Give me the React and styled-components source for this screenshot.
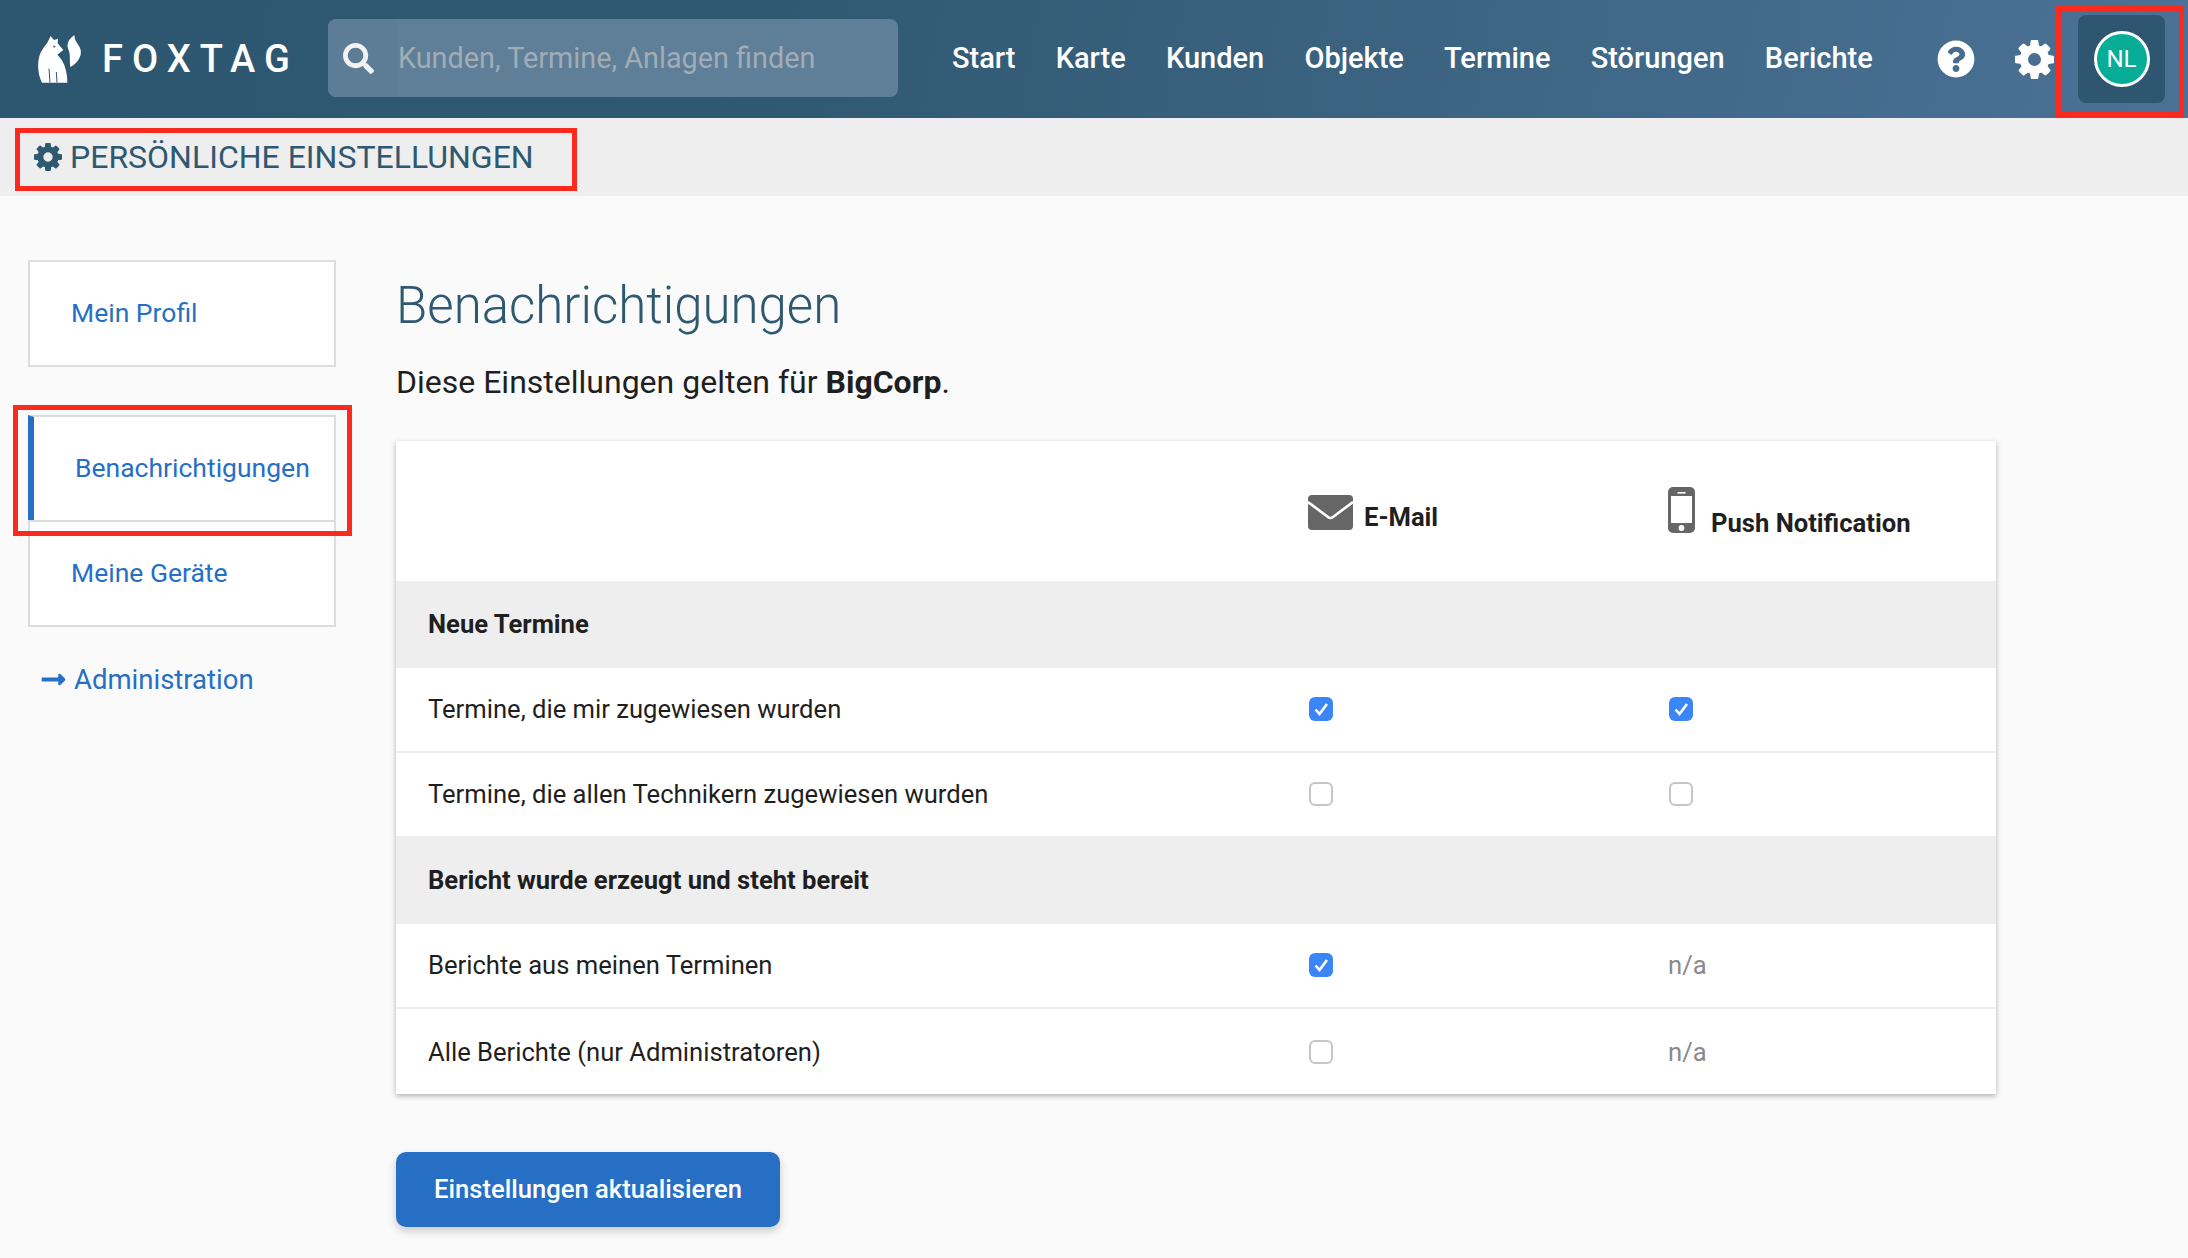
import React from "react"
import styled, { createGlobalStyle } from "styled-components"
import { FaLongArrowAltRight, FaQuestionCircle, FaSearch } from "react-icons/fa"

const GlobalStyle = createGlobalStyle`
    html, body {
        margin: 0;
        min-height: 100%;
        background: #fafafa;
        font-family: Roboto, "Liberation Sans", sans-serif;
        color: #1f1f1f;
    }
    * { box-sizing: border-box; }
`;

const NAV_ITEMS = ["Start", "Karte", "Kunden", "Objekte", "Termine", "Störungen", "Berichte"];

function CogIcon({ size }) {
    return (
        <svg width={size} height={size} viewBox="128 128 1536 1536" fill="currentColor">
            <path fillRule="evenodd" d="M1152 896q0-106-75-181t-181-75-181 75-75 181 75 181 181 75 181-75 75-181zm512-109v222q0 12-8 23t-20 13l-185 28q-19 54-39 91 35 50 107 138 10 12 10 25t-9 23q-27 37-99 108t-94 71q-12 0-26-9l-138-108q-44 23-91 38-16 136-29 186-7 28-36 28h-222q-14 0-24.5-8.5t-11.5-21.5l-28-184q-49-16-90-37l-141 107q-10 9-25 9-14 0-25-11-126-114-165-168-7-10-7-23 0-12 8-23 15-21 51-66.5t54-70.5q-27-50-41-99l-183-27q-13-2-21-12.5t-8-23.5v-222q0-12 8-23t19-13l186-28q14-46 39-92-40-57-107-138-10-12-10-24 0-10 9-23 26-36 98.5-107.5t94.5-71.5q13 0 26 10l138 107q44-23 91-38 16-136 29-186 7-28 36-28h222q14 0 24.5 8.5t11.5 21.5l28 184q49 16 90 37l142-107q9-9 24-9 13 0 25 10 129 119 165 170 7 8 7 22 0 12-8 23-15 21-51 66.5t-54 70.5q26 50 41 98l183 28q13 2 21 12.5t8 23.5z" />
        </svg>
    );
}

function FoxLogo() {
    return (
        <LogoSvg viewBox="0 0 210 195">
            <path fill="#fff" d="M62 30 L72 42 L84 38 L83 52 L100 72 L82 86 C100 102 112 130 112 170 L36 170 C26 150 22 125 26 100 C30 75 44 62 52 50 Z" />
            <path stroke="#2e5670" strokeWidth="3" fill="none" d="M57 128 L60 170 M79 138 L81 170" />
            <path fill="#2e5670" d="M68 58 L78 62 L72 65 Z" />
            <path fill="#fff" d="M133 27 C118 38 108 52 115 70 C122 86 118 104 121 123 C142 112 156 92 152 72 C148 54 134 50 133 27 Z" />
        </LogoSvg>
    );
}

function EnvelopeIcon() {
    return (
        <svg width="45" height="35" viewBox="0 0 45 35">
            <rect width="45" height="35" rx="4" fill="#666" />
            <path d="M0 7 L20 22 Q22.5 24 25 22 L45 7" fill="none" stroke="#fff" strokeWidth="2.6" />
        </svg>
    );
}

function PhoneIcon() {
    return (
        <svg width="27" height="46" viewBox="0 0 27 46">
            <rect width="27" height="46" rx="5" fill="#666" />
            <rect x="3" y="9" width="21" height="27" fill="#fff" />
            <rect x="9.5" y="5" width="8" height="1.6" fill="#fff" />
            <circle cx="13.5" cy="41" r="2.9" fill="#fff" />
        </svg>
    );
}

function Check({ checked }) {
    return (
        <CheckBox $checked={checked}>
            {checked && (
                <svg width="24" height="24" viewBox="0 0 24 24">
                    <path d="M6.5 12.5 L10.5 17 L18 7" fill="none" stroke="#fff" strokeWidth="2.6" />
                </svg>
            )}
        </CheckBox>
    );
}

export default function App() {
    return (
        <>
            <GlobalStyle />
            <Header>
                <Logo>
                    <FoxLogo />
                    <LogoText>FOXTAG</LogoText>
                </Logo>
                <Search>
                    <SearchAddon><FaSearch size={31} /></SearchAddon>
                    <SearchInput placeholder="Kunden, Termine, Anlagen finden" />
                </Search>
                <Nav>
                    {NAV_ITEMS.map((item) => <NavLink key={item}>{item}</NavLink>)}
                </Nav>
                <HeaderIcons>
                    <FaQuestionCircle size={38} />
                    <CogIcon size={39} />
                </HeaderIcons>
                <AvatarBox>
                    <Avatar>NL</Avatar>
                    <RedBox $inset="-9px -19px -14px -22px" />
                </AvatarBox>
            </Header>

            <SubHeader>
                <CogIcon size={28} />
                <SubTitle>PERSÖNLICHE EINSTELLUNGEN</SubTitle>
                <RedBox $inset="10px auto 5px 15px" $width="562px" />
            </SubHeader>

            <Page>
                <Sidebar>
                    <SideItem>Mein Profil</SideItem>
                    <SideGroup>
                        <SideItem $active>
                            Benachrichtigungen
                            <RedBox $inset="-12px -18px -16px -21px" />
                        </SideItem>
                        <SideItem>Meine Geräte</SideItem>
                    </SideGroup>
                    <AdminLink>
                        <FaLongArrowAltRight size={27} />
                        Administration
                    </AdminLink>
                </Sidebar>

                <Content>
                    <Title>Benachrichtigungen</Title>
                    <Intro>Diese Einstellungen gelten für <b>BigCorp</b>.</Intro>

                    <Card>
                        <HeadRow>
                            <span />
                            <HeadCell><EnvelopeIcon /><EmailLabel>E-Mail</EmailLabel></HeadCell>
                            <HeadCell $push><PhoneIcon /><PushLabel>Push Notification</PushLabel></HeadCell>
                        </HeadRow>

                        <GroupRow $height="87px">Neue Termine</GroupRow>
                        <Row>
                            <span>Termine, die mir zugewiesen wurden</span>
                            <Check checked />
                            <Check checked />
                        </Row>
                        <Row>
                            <span>Termine, die allen Technikern zugewiesen wurden</span>
                            <Check />
                            <Check />
                        </Row>

                        <GroupRow $height="86px">Bericht wurde erzeugt und steht bereit</GroupRow>
                        <Row>
                            <span>Berichte aus meinen Terminen</span>
                            <Check checked />
                            <NotAvailable>n/a</NotAvailable>
                        </Row>
                        <Row $last>
                            <span>Alle Berichte (nur Administratoren)</span>
                            <Check />
                            <NotAvailable>n/a</NotAvailable>
                        </Row>
                    </Card>

                    <SaveButton>Einstellungen aktualisieren</SaveButton>
                </Content>
            </Page>
        </>
    );
}

const Header = styled.header`
    display: flex;
    align-items: center;
    height: 118px;
    padding-left: 30px;
    background: linear-gradient(100deg, #2d5670 0%, #2f5871 35%, #4b7296 100%);
    color: #fff;
`;

const Logo = styled.div`
    display: flex;
    align-items: center;
    width: 298px;
    flex-shrink: 0;
`;

const LogoSvg = styled.svg`
    width: 70px;
    height: 65px;
    margin-bottom: 1px;
`;

const LogoText = styled.span`
    margin-left: 2px;
    font-size: 38px;
    font-weight: 500;
    letter-spacing: 9px;
`;

const Search = styled.div`
    display: flex;
    width: 570px;
    height: 78px;
    margin-bottom: 2px;
    border-radius: 8px;
    overflow: hidden;
    background: #5e7f97;
`;

const SearchAddon = styled.div`
    display: flex;
    align-items: center;
    justify-content: center;
    width: 70px;
    padding-right: 10px;
    color: #f2f2f2;
    background: #5c7d95;
`;

const SearchInput = styled.input`
    flex: 1;
    border: 0;
    padding: 0;
    background: transparent;
    font-family: inherit;
    font-size: 28.8px;
    outline: none;
    &::placeholder { color: #a1adb6; opacity: 1; }
`;

const Nav = styled.nav`
    display: flex;
    gap: 40.2px;
    margin: 0 0 2px 54px;
    width: 985px;
`;

const NavLink = styled.a`
    font-size: 29px;
    font-weight: 500;
`;

const HeaderIcons = styled.div`
    display: flex;
    align-items: center;
    gap: 40px;
    svg { display: block; }
`;

const AvatarBox = styled.div`
    position: relative;
    display: flex;
    align-items: center;
    justify-content: center;
    width: 87px;
    height: 88px;
    margin-left: 24px;
    border-radius: 8px;
    background: #2e5670;
`;

const Avatar = styled.div`
    display: flex;
    align-items: center;
    justify-content: center;
    width: 56px;
    height: 56px;
    border: 3px solid #fff;
    border-radius: 50%;
    background: #07ad96;
    font-size: 24px;
`;

const RedBox = styled.div`
    position: absolute;
    inset: ${(props) => props.$inset};
    width: ${(props) => props.$width || "auto"};
    border: 5px solid #fb2a1e;
    pointer-events: none;
    z-index: 2;
`;

const SubHeader = styled.div`
    position: relative;
    display: flex;
    align-items: center;
    gap: 8px;
    height: 78px;
    padding: 0 0 0 34px;
    background: #eeeeee;
    color: #2f5871;
`;

const SubTitle = styled.span`
    font-size: 32px;
`;

const Page = styled.main`
    display: flex;
    gap: 60px;
    padding: 64px 0 31px 28px;
`;

const Sidebar = styled.aside`
    display: flex;
    flex-direction: column;
    width: 308px;
    flex-shrink: 0;
`;

const SideGroup = styled.div`
    display: flex;
    flex-direction: column;
    margin-top: 48px;
`;

const SideItem = styled.a`
    position: relative;
    display: flex;
    align-items: center;
    height: ${(props) => (props.$active ? "105px" : "107px")};
    padding: 0 0 2px 41px;
    border: 2px solid #dddddd;
    border-bottom-width: ${(props) => (props.$active ? "0" : "2px")};
    border-left: ${(props) => (props.$active ? "6px solid #266fc5" : "2px solid #dddddd")};
    background: #fff;
    color: #266fc5;
    font-size: 26.5px;
`;

const AdminLink = styled.a`
    display: flex;
    align-items: center;
    gap: 7px;
    margin-top: 36px;
    padding-left: 12px;
    color: #266fc5;
    font-size: 27.5px;
`;

const Content = styled.section`
    display: flex;
    flex-direction: column;
    align-items: flex-start;
    width: 1600px;
`;

const Title = styled.h1`
    margin: 1px 0 0;
    line-height: 90px;
    color: #2f5871;
    font-size: 51px;
    font-weight: 300;
`;

const Intro = styled.p`
    margin: 11px 0 39px;
    line-height: 40px;
    font-size: 32px;
    b { font-weight: 700; }
`;

const Card = styled.div`
    width: 100%;
    background: #fff;
    box-shadow: 0 2px 5px rgba(0, 0, 0, 0.3);
`;

const RowGrid = styled.div`
    display: grid;
    grid-template-columns: 880px 360px 1fr;
    align-items: center;
    padding-left: 32px;
`;

const HeadRow = styled(RowGrid)`
    height: 140px;
    font-size: 25.6px;
    font-weight: 700;
`;

const HeadCell = styled.div`
    display: flex;
    align-items: ${(props) => (props.$push ? "flex-start" : "center")};
    gap: ${(props) => (props.$push ? "16px" : "11px")};
    margin-top: 3px;
`;

const EmailLabel = styled.span`
    margin-top: 9px;
`;

const PushLabel = styled.span`
    margin-top: 21px;
`;

const GroupRow = styled.div`
    display: flex;
    align-items: center;
    height: ${(props) => props.$height};
    padding: 0 0 2px 32px;
    background: #eeeeee;
    font-size: 25.6px;
    font-weight: 700;
`;

const Row = styled(RowGrid)`
    height: 85px;
    padding-bottom: ${(props) => (props.$last ? "0" : "1px")};
    border-bottom: ${(props) => (props.$last ? "0" : "2px solid #eeeeee")};
    font-size: 25.6px;
`;

const CheckBox = styled.span`
    display: block;
    width: 24px;
    height: 24px;
    margin-left: 0.5px;
    border-radius: 6px;
    border: ${(props) => (props.$checked ? "0" : "2px solid #c6c6c6")};
    background: ${(props) => (props.$checked ? "#3a86f8" : "#fff")};
    svg { display: block; }
`;

const NotAvailable = styled.span`
    color: #8a8a8a;
`;

const SaveButton = styled.button`
    width: 384px;
    height: 75px;
    margin-top: 58px;
    padding: 0 0 2px;
    border: 0;
    border-radius: 10px;
    background: #266fc5;
    box-shadow: 0 4px 10px rgba(0, 0, 0, 0.2);
    color: #fff;
    font-family: inherit;
    font-size: 25.6px;
    font-weight: 500;
`;
